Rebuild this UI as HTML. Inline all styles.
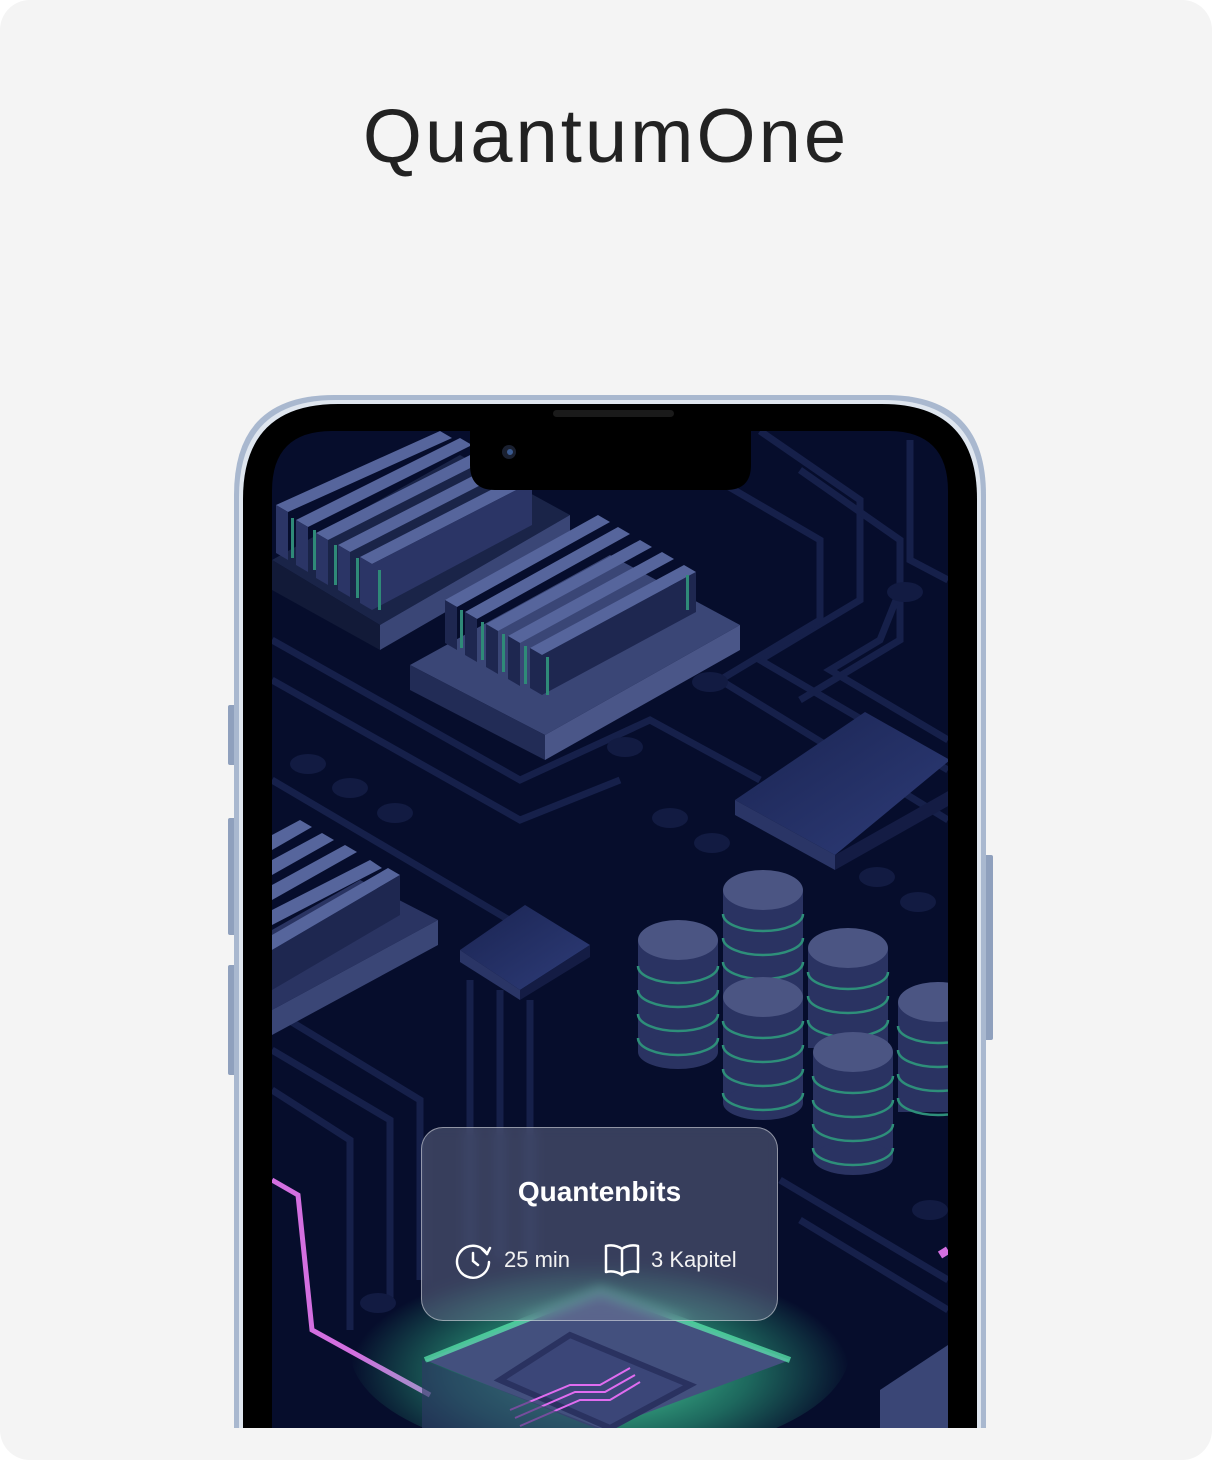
<!DOCTYPE html>
<html><head><meta charset="utf-8"><style>
html,body{margin:0;padding:0;background:#fff;}
body{width:1212px;height:1428px;position:relative;overflow:hidden;font-family:"Liberation Sans",sans-serif;}
.bg{position:absolute;left:0;top:0;width:1212px;height:1460px;background:#f4f4f4;border-radius:30px;}
h1{position:absolute;left:0;width:1212px;top:92px;margin:0;text-align:center;font-weight:400;font-size:76px;letter-spacing:3px;color:#222;line-height:90px;}
svg{position:absolute;left:0;top:0;}
.card{position:absolute;left:421px;top:1127px;width:357px;height:194px;border-radius:22px;background:rgba(125,130,160,0.42);border:1.5px solid rgba(255,255,255,0.45);box-sizing:border-box;backdrop-filter:blur(6px);}
.ct{position:absolute;left:0;width:100%;top:48px;text-align:center;color:#fff;font-weight:700;font-size:28px;}
.row{position:absolute;left:0;width:100%;top:119px;color:#f2f2f2;font-size:22px;}
</style></head><body>
<div class="bg"></div>
<h1>QuantumOne</h1>
<svg width="1212" height="1428" viewBox="0 0 1212 1428">
<defs>
<clipPath id="scr"><path d="M332 431 H888 Q948 431 948 491 V1460 H272 V491 Q272 431 332 431Z"/></clipPath>
<linearGradient id="chip" x1="0" y1="0" x2="1" y2="1"><stop offset="0" stop-color="#1a2452"/><stop offset="1" stop-color="#2e3c78"/></linearGradient>
<radialGradient id="glow" cx="0.5" cy="0.6" r="0.5"><stop offset="0" stop-color="#5cf0b0" stop-opacity="0.9"/><stop offset="0.6" stop-color="#3ad79a" stop-opacity="0.45"/><stop offset="1" stop-color="#3ad79a" stop-opacity="0"/></radialGradient>
</defs>
<rect x="228" y="705" width="8" height="60" rx="2" fill="#8fa0bd"/>
<rect x="228" y="818" width="8" height="117" rx="2" fill="#8fa0bd"/>
<rect x="228" y="965" width="8" height="110" rx="2" fill="#8fa0bd"/>
<rect x="984" y="855" width="9" height="185" rx="2" fill="#8fa0bd"/>
<path d="M334 395 H886 Q986 395 986 495 V1460 H234 V495 Q234 395 334 395Z" fill="#a9b8cf"/>
<path d="M336 400 H884 Q981 400 981 497 V1460 H239 V497 Q239 400 336 400Z" fill="#dfe6ef"/>
<path d="M338 404 H882 Q977 404 977 499 V1460 H243 V499 Q243 404 338 404Z" fill="#000"/>
<g clip-path="url(#scr)">
<rect x="272" y="431" width="676" height="1000" fill="#060d2c"/>
<g fill="none" stroke="#16204a" stroke-width="7">
<path d="M760 431 L860 500 V600 L760 660 L948 770"/>
<path d="M800 470 L900 540 V640 L800 700"/>
<path d="M910 440 V560 L948 580"/>
<path d="M700 470 L820 540 V620 L720 680 L948 820"/>
<path d="M900 590 L880 640 L830 670 L948 740"/>
<path d="M272 640 L520 780 L650 720 L760 780"/>
<path d="M272 680 L520 820 L620 780"/>
<path d="M272 780 L560 950"/>
<path d="M470 980 V1250"/><path d="M500 990 V1260"/><path d="M530 1000 V1260"/>
<path d="M272 1010 L420 1100 V1280"/>
<path d="M272 1050 L390 1120 V1300"/>
<path d="M272 1090 L350 1140 V1330"/>
<path d="M780 1180 L948 1280"/><path d="M800 1220 L948 1310"/>
</g>
<g fill="#121b42">
<ellipse cx="308" cy="764" rx="18" ry="10"/><ellipse cx="350" cy="788" rx="18" ry="10"/><ellipse cx="395" cy="813" rx="18" ry="10"/>
<ellipse cx="625" cy="747" rx="18" ry="10"/><ellipse cx="670" cy="818" rx="18" ry="10"/><ellipse cx="712" cy="843" rx="18" ry="10"/>
<ellipse cx="905" cy="592" rx="18" ry="10"/><ellipse cx="710" cy="682" rx="18" ry="10"/><ellipse cx="378" cy="1303" rx="18" ry="10"/><ellipse cx="930" cy="1210" rx="18" ry="10"/>
<ellipse cx="877" cy="877" rx="18" ry="10"/><ellipse cx="918" cy="902" rx="18" ry="10"/>
</g>
<polygon points="272,560 460,455 570,515 380,625" fill="#1a2448"/>
<polygon points="272,560 380,625 380,650 272,590" fill="#121a38"/>
<polygon points="380,625 570,515 570,540 380,650" fill="#3a4676"/>
<g fill="#56659c">
<polygon points="276,505 440,431 452,438 288,512"/><polygon points="296,520 460,438 472,445 308,527"/><polygon points="316,533 480,450 492,457 328,540"/><polygon points="338,545 500,462 512,469 350,552"/><polygon points="360,557 520,475 532,482 372,564"/>
</g>
<g fill="#2b3566">
<polygon points="276,505 288,512 288,560 276,553"/><polygon points="296,520 308,527 308,572 296,565"/><polygon points="316,533 328,540 328,585 316,578"/><polygon points="338,545 350,552 350,597 338,590"/><polygon points="360,557 372,564 372,610 360,603"/>
<polygon points="372,564 532,482 532,525 372,610"/>
</g>
<g fill="#2f8a78"><rect x="291" y="518" width="3" height="40"/><rect x="313" y="530" width="3" height="40"/><rect x="334" y="545" width="3" height="40"/><rect x="356" y="558" width="3" height="40"/><rect x="378" y="570" width="3" height="40"/></g>
<polygon points="410,665 610,555 740,625 545,735" fill="#3a4676"/>
<polygon points="410,665 545,735 545,760 410,690" fill="#222c56"/>
<polygon points="545,735 740,625 740,650 545,760" fill="#4a5688"/>
<g fill="#56659c">
<polygon points="445,600 598,515 610,522 457,607"/><polygon points="465,612 618,527 630,534 477,619"/><polygon points="486,624 640,540 652,547 498,631"/><polygon points="508,636 662,552 674,559 520,643"/><polygon points="530,648 684,565 696,572 542,655"/>
</g>
<g fill="#1e2750">
<polygon points="445,600 457,607 457,650 445,643"/><polygon points="465,612 477,619 477,662 465,655"/><polygon points="486,624 498,631 498,674 486,667"/><polygon points="508,636 520,643 520,686 508,679"/><polygon points="530,648 542,655 542,695 530,688"/>
<polygon points="542,655 696,572 696,612 542,695"/>
</g>
<g fill="#2f8a78"><rect x="460" y="610" width="3" height="38"/><rect x="481" y="622" width="3" height="38"/><rect x="502" y="634" width="3" height="38"/><rect x="524" y="646" width="3" height="38"/><rect x="546" y="657" width="3" height="38"/><rect x="686" y="575" width="3" height="35"/></g>
<polygon points="272,930 360,880 438,920 272,1010" fill="#2a3462"/>
<polygon points="272,1010 438,920 438,945 272,1035" fill="#3a4676"/>
<g fill="#56659c"><polygon points="272,835 300,820 312,827 272,850"/><polygon points="272,860 322,833 334,840 272,875"/><polygon points="272,885 345,845 357,852 272,900"/><polygon points="272,910 370,860 382,868 272,925"/><polygon points="272,935 388,868 400,875 272,950"/></g>
<polygon points="272,950 400,875 400,915 272,990" fill="#1e2750"/>
<polygon points="735,800 865,712 950,760 835,855" fill="url(#chip)"/>
<polygon points="735,800 835,855 835,870 735,815" fill="#2a3566"/>
<polygon points="835,855 950,790 950,805 835,870" fill="#141c44"/>
<polygon points="460,950 525,905 590,945 520,990" fill="url(#chip)"/>
<polygon points="460,950 520,990 520,1000 460,962" fill="#2a3566"/>
<polygon points="520,990 590,945 590,957 520,1000" fill="#141c44"/>
<g>
<g><rect x="638" y="940" width="80" height="112" fill="#2a3362"/><ellipse cx="678" cy="1052" rx="40" ry="17" fill="#2a3362"/>
<g fill="none" stroke="#2e8f7a" stroke-width="2.5"><path d="M638 966 a40 17 0 0 0 80 0"/><path d="M638 990 a40 17 0 0 0 80 0"/><path d="M638 1014 a40 17 0 0 0 80 0"/><path d="M638 1038 a40 17 0 0 0 80 0"/></g>
<ellipse cx="678" cy="940" rx="40" ry="20" fill="#4b5583"/></g>
<g><rect x="723" y="890" width="80" height="110" fill="#2a3362"/>
<g fill="none" stroke="#2e8f7a" stroke-width="2.5"><path d="M723 914 a40 17 0 0 0 80 0"/><path d="M723 938 a40 17 0 0 0 80 0"/><path d="M723 962 a40 17 0 0 0 80 0"/></g>
<ellipse cx="763" cy="890" rx="40" ry="20" fill="#4b5583"/></g>
<g><rect x="808" y="948" width="80" height="100" fill="#2a3362"/>
<g fill="none" stroke="#2e8f7a" stroke-width="2.5"><path d="M808 972 a40 17 0 0 0 80 0"/><path d="M808 996 a40 17 0 0 0 80 0"/><path d="M808 1020 a40 17 0 0 0 80 0"/></g>
<ellipse cx="848" cy="948" rx="40" ry="20" fill="#4b5583"/></g>
<g><rect x="898" y="1002" width="60" height="110" fill="#2a3362"/>
<g fill="none" stroke="#2e8f7a" stroke-width="2.5"><path d="M898 1026 a40 17 0 0 0 80 0"/><path d="M898 1050 a40 17 0 0 0 80 0"/><path d="M898 1074 a40 17 0 0 0 80 0"/><path d="M898 1098 a40 17 0 0 0 80 0"/></g>
<ellipse cx="938" cy="1002" rx="40" ry="20" fill="#4b5583"/></g>
<g><rect x="723" y="997" width="80" height="106" fill="#2a3362"/><ellipse cx="763" cy="1103" rx="40" ry="17" fill="#2a3362"/>
<g fill="none" stroke="#2e8f7a" stroke-width="2.5"><path d="M723 1021 a40 17 0 0 0 80 0"/><path d="M723 1045 a40 17 0 0 0 80 0"/><path d="M723 1069 a40 17 0 0 0 80 0"/><path d="M723 1093 a40 17 0 0 0 80 0"/></g>
<ellipse cx="763" cy="997" rx="40" ry="20" fill="#4b5583"/></g>
<g><rect x="813" y="1052" width="80" height="106" fill="#2a3362"/><ellipse cx="853" cy="1158" rx="40" ry="17" fill="#2a3362"/>
<g fill="none" stroke="#2e8f7a" stroke-width="2.5"><path d="M813 1076 a40 17 0 0 0 80 0"/><path d="M813 1100 a40 17 0 0 0 80 0"/><path d="M813 1124 a40 17 0 0 0 80 0"/><path d="M813 1148 a40 17 0 0 0 80 0"/></g>
<ellipse cx="853" cy="1052" rx="40" ry="20" fill="#4b5583"/></g>
</g>
<path d="M272 1180 L298 1195 L312 1330 L430 1395" fill="none" stroke="#d36fe0" stroke-width="5"/>
<path d="M940 1255 L948 1250" stroke="#d36fe0" stroke-width="8"/>
<polygon points="880,1390 948,1345 948,1428 880,1428" fill="#3a4676"/>
<ellipse cx="600" cy="1350" rx="250" ry="110" fill="url(#glow)"/>
<polygon points="425,1360 600,1290 790,1360 600,1430" fill="#43507e"/>
<polyline points="425,1360 600,1290 790,1360" fill="none" stroke="#5cf0b0" stroke-width="6" opacity="0.7"/>
<polygon points="500,1380 570,1335 690,1385 610,1428" fill="#3b4678" stroke="#2a3260" stroke-width="6"/>
<g fill="none" stroke="#e06cf0" stroke-width="2"><path d="M510 1410 L570 1385 H600 L630 1368"/><path d="M515 1418 L575 1392 H605 L635 1375"/><path d="M520 1426 L580 1400 H610 L640 1382"/></g>
<polygon points="422,1360 422,1428 600,1428" fill="#2e3866" opacity="0.6"/>
</g>
<path d="M470 431 H751 V465 Q751 490 726 490 H495 Q470 490 470 465Z" fill="#000"/>
<rect x="553" y="410" width="121" height="7" rx="3.5" fill="#1a1a1a"/>
<circle cx="509" cy="452" r="7" fill="#1a2030"/><circle cx="510" cy="452" r="3" fill="#3a5a90"/>
</svg>
<div class="card">
<div class="ct">Quantenbits</div>
<div class="row">
<svg width="40" height="40" viewBox="0 0 40 40" style="left:32px;top:-7px"><path d="M33 14 A16 16 0 1 0 35 22" fill="none" stroke="#fff" stroke-width="2.5" stroke-linecap="round"/><path d="M28 9 L33 14 L36 8" fill="none" stroke="#fff" stroke-width="2.5" stroke-linecap="round" stroke-linejoin="round"/><path d="M19 13 V21 L24 25" fill="none" stroke="#fff" stroke-width="2.5" stroke-linecap="round"/></svg>
<span style="position:absolute;left:82px;top:0">25 min</span>
<svg width="40" height="40" viewBox="0 0 40 40" style="left:180px;top:-7px"><path d="M20 9 Q13 4 4 6 V32 Q13 30 20 35 Q27 30 36 32 V6 Q27 4 20 9 Z M20 9 V35" fill="none" stroke="#fff" stroke-width="2.5" stroke-linejoin="round"/></svg>
<span style="position:absolute;left:229px;top:0">3 Kapitel</span>
</div>
</div>
</body></html>
